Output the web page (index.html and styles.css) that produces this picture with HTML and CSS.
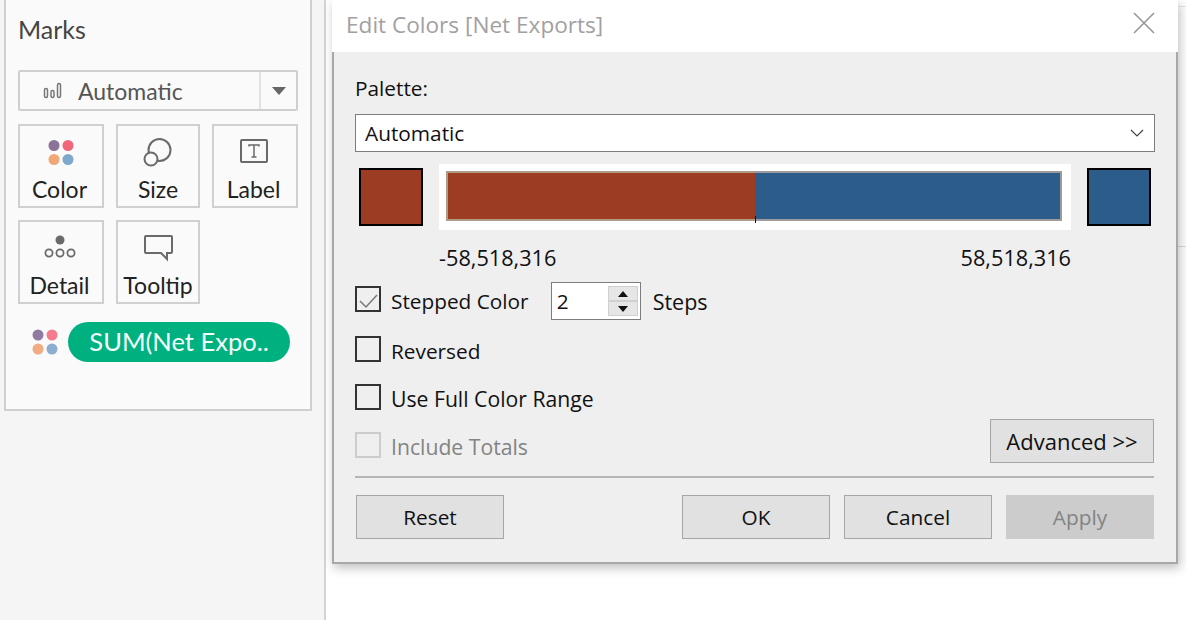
FILE: index.html
```html
<!DOCTYPE html>
<html lang="en">
<head>
    <meta charset="UTF-8">
    <meta name="viewport" content="width=device-width, initial-scale=1.0">
    <title>Edit Colors</title>
    <link rel="stylesheet" href="styles.css">
</head>
<body>
    <div class="app">
        <aside class="sidebar">
            <section class="marks">
                <h2 class="marks-title">Marks</h2>
                <div class="mark-type">
                    <svg class="bars-icon" width="20" height="20" viewBox="0 0 20 20">
                        <rect x="1.5" y="7.5" width="3" height="9" rx="1.5"/>
                        <rect x="8" y="9.5" width="3" height="7" rx="1.5"/>
                        <rect x="14.5" y="2.5" width="3" height="14" rx="1.5"/>
                    </svg>
                    <span class="mark-type-name">Automatic</span>
                    <span class="mark-type-arrow"><span class="triangle"></span></span>
                </div>
                <div class="cards">
                    <div class="card card-wide">
                        <svg class="card-icon" width="30" height="30" viewBox="0 0 30 30">
                            <circle cx="9" cy="8.5" r="5.5" fill="#8a7299"/>
                            <circle cx="23" cy="8.5" r="5.5" fill="#f0667b"/>
                            <circle cx="9" cy="22.5" r="5.5" fill="#f0a877"/>
                            <circle cx="23" cy="22.5" r="5.5" fill="#7fa8cc"/>
                        </svg>
                        <span>Color</span>
                    </div>
                    <div class="card">
                        <svg class="card-icon" width="30" height="30" viewBox="0 0 30 30" fill="none" stroke="#6a6a6a" stroke-width="2">
                            <circle cx="16.5" cy="13" r="11"/>
                            <circle cx="8" cy="22" r="6.5" fill="#fafafa"/>
                        </svg>
                        <span>Size</span>
                    </div>
                    <div class="card card-wide">
                        <svg class="card-icon" width="30" height="30" viewBox="0 0 30 30" fill="none" stroke="#6a6a6a">
                            <rect x="2" y="3" width="26" height="22" rx="1" stroke-width="2"/>
                            <path d="M10 9.5V8h10v1.500M15 8v12M12.500 20h5" stroke-width="1.500"/>
                        </svg>
                        <span>Label</span>
                    </div>
                    <div class="card card-wide">
                        <svg class="card-icon" width="32" height="30" viewBox="0 0 32 30" fill="none" stroke="#6a6a6a" stroke-width="1.800">
                            <circle cx="16" cy="7" r="4.500" fill="#6a6a6a" stroke="none"/>
                            <circle cx="5" cy="20" r="3.600"/>
                            <circle cx="16" cy="20" r="3.600"/>
                            <circle cx="27" cy="20" r="3.600"/>
                        </svg>
                        <span>Detail</span>
                    </div>
                    <div class="card">
                        <svg class="card-icon" width="30" height="30" viewBox="0 0 30 30" fill="none" stroke="#6a6a6a" stroke-width="2">
                            <path d="M3 3h25a1 1 0 0 1 1 1v15a1 1 0 0 1-1 1h-4v6l-6-6H3a1 1 0 0 1-1-1V4a1 1 0 0 1 1-1z"/>
                        </svg>
                        <span>Tooltip</span>
                    </div>
                </div>
                <div class="field-row">
                    <svg width="26" height="26" viewBox="0 0 26 26">
                        <circle cx="6" cy="6" r="5.500" fill="#8f7ba0"/>
                        <circle cx="20" cy="6" r="5.500" fill="#f47c8c"/>
                        <circle cx="6" cy="20" r="5.500" fill="#f0ab82"/>
                        <circle cx="20" cy="20" r="5.500" fill="#8dadd0"/>
                    </svg>
                    <span class="pill">SUM(Net Expo..</span>
                </div>
            </section>
        </aside>
        <main class="sheet">
            <div class="sheet-top"></div>
        </main>
    </div>

    <div class="dialog">
        <header class="dialog-head">
            <span class="dialog-title">Edit Colors [Net Exports]</span>
            <svg class="close" width="22" height="22" viewBox="0 0 22 22" stroke="#9a9a9a" stroke-width="1.700">
                <path d="M1 1l20 20M21 1L1 21"/>
            </svg>
        </header>
        <div class="dialog-body">
            <div class="palette-label">Palette:</div>
            <div class="select">
                <span>Automatic</span>
                <svg width="14" height="8" viewBox="0 0 14 8" fill="none" stroke="#444" stroke-width="1.200">
                    <path d="M1 1l6 6 6-6"/>
                </svg>
            </div>
            <div class="ramp">
                <div class="swatch swatch-red"></div>
                <div class="ramp-box">
                    <div class="ramp-bar">
                        <div class="ramp-red"></div>
                        <div class="ramp-blue"></div>
                        <div class="ramp-tick"></div>
                    </div>
                </div>
                <div class="swatch swatch-blue"></div>
            </div>
            <div class="ramp-labels">
                <span>-58,518,316</span>
                <span>58,518,316</span>
            </div>
            <div class="option option-steps">
                <span class="check">
                    <svg width="22" height="22" viewBox="0 0 22 22" fill="none" stroke="#777" stroke-width="1.500">
                        <path d="M3 13l6 6L20 7"/>
                    </svg>
                </span>
                <span class="option-text">Stepped Color</span>
                <div class="spinner">
                    <span class="spinner-value">2</span>
                    <div class="spin-btns">
                        <div class="spin-btn"><span class="spin-up"></span></div>
                        <div class="spin-btn"><span class="spin-down"></span></div>
                    </div>
                </div>
                <span class="steps-text">Steps</span>
            </div>
            <div class="option option-reversed"><span class="check"></span><span class="option-text">Reversed</span></div>
            <div class="option"><span class="check"></span><span class="option-text text-wide">Use Full Color Range</span></div>
            <div class="option-last">
                <div class="option option-off"><span class="check"></span><span class="option-text text-wide">Include Totals</span></div>
                <div class="btn btn-advanced">Advanced &gt;&gt;</div>
            </div>
            <div class="separator"></div>
            <div class="footer">
                <div class="btn">Reset</div>
                <div class="footer-right">
                    <div class="btn">OK</div>
                    <div class="btn">Cancel</div>
                    <div class="btn btn-disabled">Apply</div>
                </div>
            </div>
        </div>
    </div>
</body>
</html>
```

FILE: styles.css
```css
html, body {
    margin: 0;
    padding: 0;
    height: 620px;
    overflow: hidden;
    background: #fff;
}
body {
    font-family: "Open Sans", "Noto Sans", sans-serif;
    color: #111;
}
.app {
    display: flex;
    height: 620px;
}
.sidebar {
    width: 326px;
    height: 620px;
    box-sizing: border-box;
    padding-left: 4px;
    background: #f5f5f5;
    border-right: 2px solid #d4d4d4;
    flex: none;
}
.marks {
    width: 308px;
    height: 411px;
    box-sizing: border-box;
    padding: 0 12px 0 12px;
    background: #fafafa;
    border: 2px solid #d0d0d0;
    border-top: none;
}
.marks-title {
    margin: 0;
    padding-top: 14px;
    height: 70px;
    box-sizing: border-box;
    font-family: Lato, sans-serif;
    font-size: 25px;
    line-height: 30px;
    font-weight: 400;
    color: #444;
}
.mark-type {
    display: flex;
    align-items: center;
    width: 280px;
    height: 41px;
    box-sizing: border-box;
    border: 2px solid #cfcfcf;
    border-radius: 2px;
    color: #555;
    font-family: Lato, sans-serif;
    font-size: 23px;
}
.bars-icon {
    margin-left: 23px;
    fill: none;
    stroke: #777;
    stroke-width: 1.500;
}
.mark-type-name {
    margin-left: 15px;
    flex: 1;
}
.mark-type-arrow {
    width: 35px;
    height: 37px;
    border-left: 2px solid #e2e2e2;
    display: flex;
    align-items: center;
    justify-content: center;
}
.triangle {
    border-left: 7px solid transparent;
    border-right: 7px solid transparent;
    border-top: 8px solid #666;
}
.cards {
    display: grid;
    grid-template-columns: 86px 84px 86px;
    grid-auto-rows: 84px;
    gap: 12px;
    margin-top: 13px;
}
.card {
    box-sizing: border-box;
    border: 2px solid #d0d0d0;
    display: flex;
    flex-direction: column;
    align-items: center;
    font-family: Lato, sans-serif;
    font-size: 23px;
    line-height: 28px;
    color: #222;
}
.card-wide {
    padding-right: 3px;
}
.card-icon {
    margin-top: 11px;
    margin-bottom: 8px;
}
.field-row {
    display: flex;
    align-items: center;
    gap: 10px;
    margin-top: 18px;
    padding-left: 14px;
}
.pill {
    width: 222px;
    height: 40px;
    border-radius: 20px;
    background: #00b180;
    color: #f4fffb;
    font-family: Lato, sans-serif;
    font-size: 25.5px;
    line-height: 39px;
    text-align: center;
}
.sheet {
    flex: 1;
    padding-top: 6px;
}
.sheet-top {
    height: 239px;
    margin-left: 10px;
    border-top: 1px solid #e6e6e6;
    border-bottom: 1px solid #d8d8d8;
}

/* dialog floats over the app */
.dialog {
    position: absolute;
    left: 332px;
    top: 0;
    width: 846px;
    height: 564px;
    box-sizing: border-box;
    background: #efefef;
    border-right: 2px solid #a8a8a8;
    border-bottom: 2px solid #a8a8a8;
    border-left: 2px solid #a8a8a8;
    box-shadow: 2px 4px 10px rgba(0, 0, 0, 0.25);
    font-size: 20.8px;
}
.dialog-head {
    display: flex;
    align-items: center;
    justify-content: space-between;
    height: 52px;
    margin: 0 -2px 0 -2px;
    padding: 0 23px 4px 14px;
    box-sizing: border-box;
    background: #fff;
}
.dialog-title {
    font-size: 22.6px;
    color: #a2a0a2;
}
.close {
    margin-bottom: 2px;
}
.dialog-body {
    padding: 0 22px 0 21px;
}
.palette-label {
    height: 62px;
    line-height: 72px;
    box-sizing: border-box;
}
.select {
    display: flex;
    align-items: center;
    justify-content: space-between;
    height: 38px;
    box-sizing: border-box;
    margin-right: -1px;
    padding: 0 10px 0 9px;
    background: #fff;
    border: 1px solid #7d7d7d;
}
.ramp {
    display: flex;
    align-items: center;
    justify-content: space-between;
    margin-top: 12px;
    padding: 0 3px 0 4px;
}
.swatch {
    width: 64px;
    height: 58px;
    box-sizing: border-box;
    border: 2px solid #000;
}
.swatch-red { background: #9c3c22; }
.swatch-blue { background: #2c5c8a; }
.ramp-box {
    width: 632px;
    height: 66px;
    box-sizing: border-box;
    padding: 7px;
    background: #fff;
}
.ramp-bar {
    position: relative;
    display: flex;
    height: 50px;
    margin-right: 2px;
}
.ramp-red {
    width: 309px;
    box-sizing: border-box;
    background: #9c3c22;
    border: 2px solid #ac9c88;
    border-right: none;
}
.ramp-blue {
    flex: 1;
    box-sizing: border-box;
    background: #2c5c8a;
    border: 2px solid #9c9c9c;
    border-left: none;
}
.ramp-tick {
    position: absolute;
    left: 309px;
    top: 45px;
    width: 1px;
    height: 7px;
    background: #111;
}
.ramp-labels {
    display: flex;
    justify-content: space-between;
    width: 632px;
    margin: 14px 0 0 84px;
    height: 28px;
    line-height: 28px;
    font-size: 21.7px;
}
.option {
    display: flex;
    align-items: center;
    height: 26px;
    margin-top: 22px;
}
.option-steps {
    margin-top: 14px;
}
.option-reversed {
    margin-top: 24px;
}
.check {
    width: 26px;
    height: 26px;
    box-sizing: border-box;
    border: 2px solid #333;
    display: flex;
    align-items: center;
    justify-content: center;
    flex: none;
}
.option-text {
    margin: 3px 0 0 10px;
    line-height: 26px;
}
.text-wide {
    font-size: 21.2px;
}
.spinner {
    display: flex;
    align-items: center;
    justify-content: space-between;
    width: 90px;
    height: 38px;
    flex: none;
    box-sizing: border-box;
    margin: 4px 0 0 22px;
    padding: 0 2px 0 5px;
    background: #fff;
    border: 1px solid #7d7d7d;
}
.spin-btns {
    width: 30px;
    display: flex;
    flex-direction: column;
}
.spin-btn {
    height: 15px;
    display: flex;
    align-items: center;
    justify-content: center;
    background: #e6e6e6;
    border: 1px solid #d0d0d0;
    box-sizing: border-box;
}
.spin-up {
    border-left: 5px solid transparent;
    border-right: 5px solid transparent;
    border-bottom: 6px solid #111;
}
.spin-down {
    border-left: 5px solid transparent;
    border-right: 5px solid transparent;
    border-top: 6px solid #111;
}
.steps-text {
    margin: 4px 0 0 12px;
    font-size: 21.5px;
}
.option-last {
    display: flex;
    align-items: flex-end;
    justify-content: space-between;
}
.option-off {
    margin-bottom: 5px;
    color: #838383;
}
.option-off .check {
    border-color: #ccc;
}
.btn {
    width: 148px;
    height: 44px;
    box-sizing: border-box;
    background: #e1e1e1;
    border: 1px solid #a6a6a6;
    text-align: center;
    line-height: 43px;
}
.btn-advanced {
    width: 164px;
    font-size: 22px;
}
.btn-disabled {
    background: #ccc;
    border-color: #ccc;
    color: #838383;
}
.separator {
    height: 2px;
    margin-top: 13px;
    background: #b5b5b5;
}
.footer {
    display: flex;
    justify-content: space-between;
    margin: 17px 0 0 1px;
}
.footer-right {
    display: flex;
    gap: 14px;
}
```
